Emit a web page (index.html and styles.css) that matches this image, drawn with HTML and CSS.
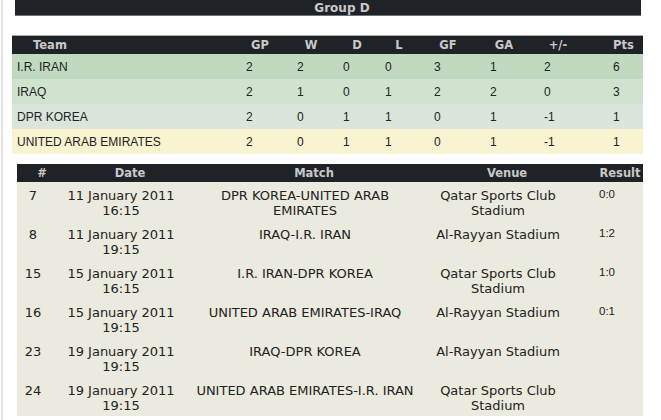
FILE: index.html
```html
<!DOCTYPE html>
<html>
<head>
<meta charset="utf-8">
<link rel="stylesheet" href="styles.css">
</head>
<body>
<div class="page">
  <div class="group-bar">Group D</div>

  <table class="standings">
    <colgroup>
      <col class="c-team"><col class="c-gp"><col class="c-w"><col class="c-d"><col class="c-l"><col class="c-gf"><col class="c-ga"><col class="c-pm"><col class="c-pts">
    </colgroup>
    <thead>
      <tr>
        <th class="team-h">Team</th>
        <th><span>GP</span></th>
        <th><span>W</span></th>
        <th><span>D</span></th>
        <th><span>L</span></th>
        <th><span>GF</span></th>
        <th><span>GA</span></th>
        <th><span>+/-</span></th>
        <th><span class="pts">Pts</span></th>
      </tr>
    </thead>
    <tbody>
      <tr class="r1"><td class="team">I.R. IRAN</td><td>2</td><td>2</td><td>0</td><td>0</td><td>3</td><td>1</td><td>2</td><td>6</td></tr>
      <tr class="r2"><td class="team">IRAQ</td><td>2</td><td>1</td><td>0</td><td>1</td><td>2</td><td>2</td><td>0</td><td>3</td></tr>
      <tr class="r3"><td class="team">DPR KOREA</td><td>2</td><td>0</td><td>1</td><td>1</td><td>0</td><td>1</td><td>-1</td><td>1</td></tr>
      <tr class="r4"><td class="team">UNITED ARAB EMIRATES</td><td>2</td><td>0</td><td>1</td><td>1</td><td>0</td><td>1</td><td>-1</td><td>1</td></tr>
    </tbody>
  </table>

  <table class="matches">
    <colgroup>
      <col class="m-no"><col class="m-date"><col class="m-match"><col class="m-venue"><col class="m-res">
    </colgroup>
    <thead>
      <tr><th>#</th><th>Date</th><th>Match</th><th>Venue</th><th>Result</th></tr>
    </thead>
    <tbody>
      <tr><td>7</td><td>11 January 2011<br>16:15</td><td>DPR KOREA-UNITED ARAB<br>EMIRATES</td><td>Qatar Sports Club<br>Stadium</td><td class="res">0:0</td></tr>
      <tr><td>8</td><td>11 January 2011<br>19:15</td><td>IRAQ-I.R. IRAN</td><td>Al-Rayyan Stadium</td><td class="res">1:2</td></tr>
      <tr><td>15</td><td>15 January 2011<br>16:15</td><td>I.R. IRAN-DPR KOREA</td><td>Qatar Sports Club<br>Stadium</td><td class="res">1:0</td></tr>
      <tr><td>16</td><td>15 January 2011<br>19:15</td><td>UNITED ARAB EMIRATES-IRAQ</td><td>Al-Rayyan Stadium</td><td class="res">0:1</td></tr>
      <tr><td>23</td><td>19 January 2011<br>19:15</td><td>IRAQ-DPR KOREA</td><td>Al-Rayyan Stadium</td><td class="res"></td></tr>
      <tr><td>24</td><td>19 January 2011<br>19:15</td><td>UNITED ARAB EMIRATES-I.R. IRAN</td><td>Qatar Sports Club<br>Stadium</td><td class="res"></td></tr>
    </tbody>
  </table>
</div>
</body>
</html>
```

FILE: styles.css
```css
html, body {
  margin: 0;
  padding: 0;
  background: #ffffff;
}

.page {
  margin-left: 1px;
  border-left: 2px solid #e4e4e4;
  min-height: 420px;
  box-sizing: border-box;
}

.group-bar {
  margin-left: 12px;
  width: 626px;
  height: 16px;
  box-sizing: border-box;
  padding-left: 28px;
  background: #1f2327;
  border-bottom: 1px solid #6f7275;
  color: #c9c9c9;
  font: bold 12px/16px "DejaVu Sans", Verdana, sans-serif;
  text-align: center;
}

.standings {
  margin-top: 19px;
  margin-left: 9px;
  width: 631px;
  border-collapse: collapse;
  table-layout: fixed;
  font: 12px "Liberation Sans", Arial, sans-serif;
  color: #222;
}

.c-team { width: 234px; }
.c-gp { width: 51px; }
.c-w { width: 46px; }
.c-d { width: 42px; }
.c-l { width: 49px; }
.c-gf { width: 56px; }
.c-ga { width: 54px; }
.c-pm { width: 69px; }
.c-pts { width: 30px; }

.standings th {
  height: 18px;
  padding: 0;
  background: #1f2327;
  border-top: 1px solid #a8a8a8;
  color: #c9c9c9;
  font: bold 11.5px "DejaVu Sans", Verdana, sans-serif;
  text-align: left;
  vertical-align: middle;
}

.standings th span {
  display: inline-block;
  width: 28px;
  text-align: center;
}

.standings th span.pts {
  width: 20px;
}

.standings th.team-h {
  padding-left: 21px;
}

.standings td {
  height: 25px;
  padding: 0;
  vertical-align: middle;
  text-align: left;
}

.standings td.team {
  padding-left: 5px;
}

.standings .r1 { background: #c0d9bf; }
.standings .r2 { background: #d0e3cf; }
.standings .r3 { background: #dae5dc; }
.standings .r4 { background: #f8f4d1; }

.matches {
  margin-top: 10px;
  margin-left: 14px;
  width: 626px;
  border-collapse: collapse;
  table-layout: fixed;
  font: 13px/15px "DejaVu Sans", Verdana, sans-serif;
  color: #222;
  background: #ebeade;
}

.m-no { width: 32px; }
.m-date { width: 144px; }
.m-match { width: 224px; }
.m-venue { width: 162px; }
.m-res { width: 64px; }

.matches th {
  height: 18px;
  padding: 0 0 0 18px;
  background: #1f2327;
  color: #c9c9c9;
  font: bold 11.5px "DejaVu Sans", Verdana, sans-serif;
  text-align: center;
  vertical-align: middle;
  white-space: nowrap;
}

.matches td {
  padding: 6px 0 3px;
  text-align: center;
  vertical-align: top;
  white-space: nowrap;
}

.matches td.res {
  text-align: left;
  padding: 5px 0 4px 20px;
  font: 11.5px/15px "Liberation Sans", Arial, sans-serif;
}
```
